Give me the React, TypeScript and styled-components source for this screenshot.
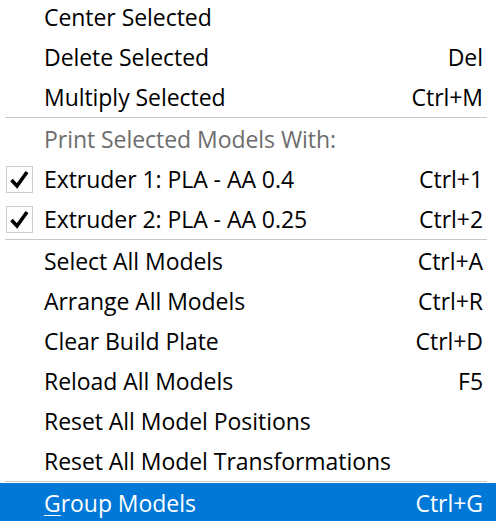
import React from "react";
import styled, { createGlobalStyle } from "styled-components";

const Global = createGlobalStyle`
  html, body { margin: 0; padding: 0; background: #ffffff; }
  body { font-family: "Open Sans", "Noto Sans", sans-serif; }
`;

const Menu = styled.div`
  width: 496px;
  height: 521px;
  overflow: hidden;
  background: #ffffff;
  display: flex;
  flex-direction: column;
  box-sizing: border-box;
`;

const Items = styled.div`
  display: flex;
  flex-direction: column;
  margin-top: -3px;
`;

const Row = styled.div<{ $active?: boolean; $muted?: boolean }>`
  height: 40px;
  flex: 0 0 40px;
  display: flex;
  align-items: center;
  box-sizing: border-box;
  padding: 0 13px 0 6px;
  font-size: 23px;
  letter-spacing: -0.05px;
  color: ${(p) => (p.$active ? "#ffffff" : p.$muted ? "#6d6d6d" : "#000000")};
  background: ${(p) => (p.$active ? "#0078d7" : "transparent")};
`;

const CheckCell = styled.div`
  width: 38px;
  flex: 0 0 38px;
  display: flex;
  align-items: center;
`;

const CheckBox = styled.div`
  width: 27px;
  height: 27px;
  box-sizing: border-box;
  border: 1px solid #cccccc;
  background: #fdfdfd;
  display: flex;
  align-items: center;
  justify-content: center;
`;

const Label = styled.span`
  flex: 1;
  white-space: nowrap;
`;

const Shortcut = styled.span`
  white-space: nowrap;
`;

const Separator = styled.div`
  flex: 0 0 2px;
  height: 2px;
  margin: 0 9px 0 5px;
  border-top: 1px solid #c8c8c8;
  box-sizing: border-box;
`;

const Mnemonic = styled.span`
  text-decoration: underline;
  text-underline-offset: 3px;
  text-decoration-thickness: 1px;
`;

const Check = () => (
  <svg width="21" height="21" viewBox="0 0 21 21">
    <path d="M2.5 11 L8 17 L18 3" fill="none" stroke="#000" strokeWidth="3.6" strokeLinecap="butt" strokeLinejoin="miter" />
  </svg>
);

type Item = { label: React.ReactNode; shortcut?: string; checked?: boolean; muted?: boolean; active?: boolean };

const Entry = ({ label, shortcut, checked, muted, active }: Item) => (
  <Row $active={active} $muted={muted}>
    <CheckCell>
      {checked && (
        <CheckBox>
          <Check />
        </CheckBox>
      )}
    </CheckCell>
    <Label>{label}</Label>
    {shortcut && <Shortcut>{shortcut}</Shortcut>}
  </Row>
);

export default function App() {
  return (
    <>
      <Global />
      <Menu>
        <Items>
          <Entry label="Center Selected" />
          <Entry label="Delete Selected" shortcut="Del" />
          <Entry label="Multiply Selected" shortcut="Ctrl+M" />
          <Separator />
          <Entry label="Print Selected Models With:" muted />
          <Entry label="Extruder 1: PLA - AA 0.4" shortcut="Ctrl+1" checked />
          <Entry label="Extruder 2: PLA - AA 0.25" shortcut="Ctrl+2" checked />
          <Separator />
          <Entry label="Select All Models" shortcut="Ctrl+A" />
          <Entry label="Arrange All Models" shortcut="Ctrl+R" />
          <Entry label="Clear Build Plate" shortcut="Ctrl+D" />
          <Entry label="Reload All Models" shortcut="F5" />
          <Entry label="Reset All Model Positions" />
          <Entry label="Reset All Model Transformations" />
          <Separator />
          <Entry
            label={
              <>
                <Mnemonic>G</Mnemonic>roup Models
              </>
            }
            shortcut="Ctrl+G"
            active
          />
        </Items>
      </Menu>
    </>
  );
}
